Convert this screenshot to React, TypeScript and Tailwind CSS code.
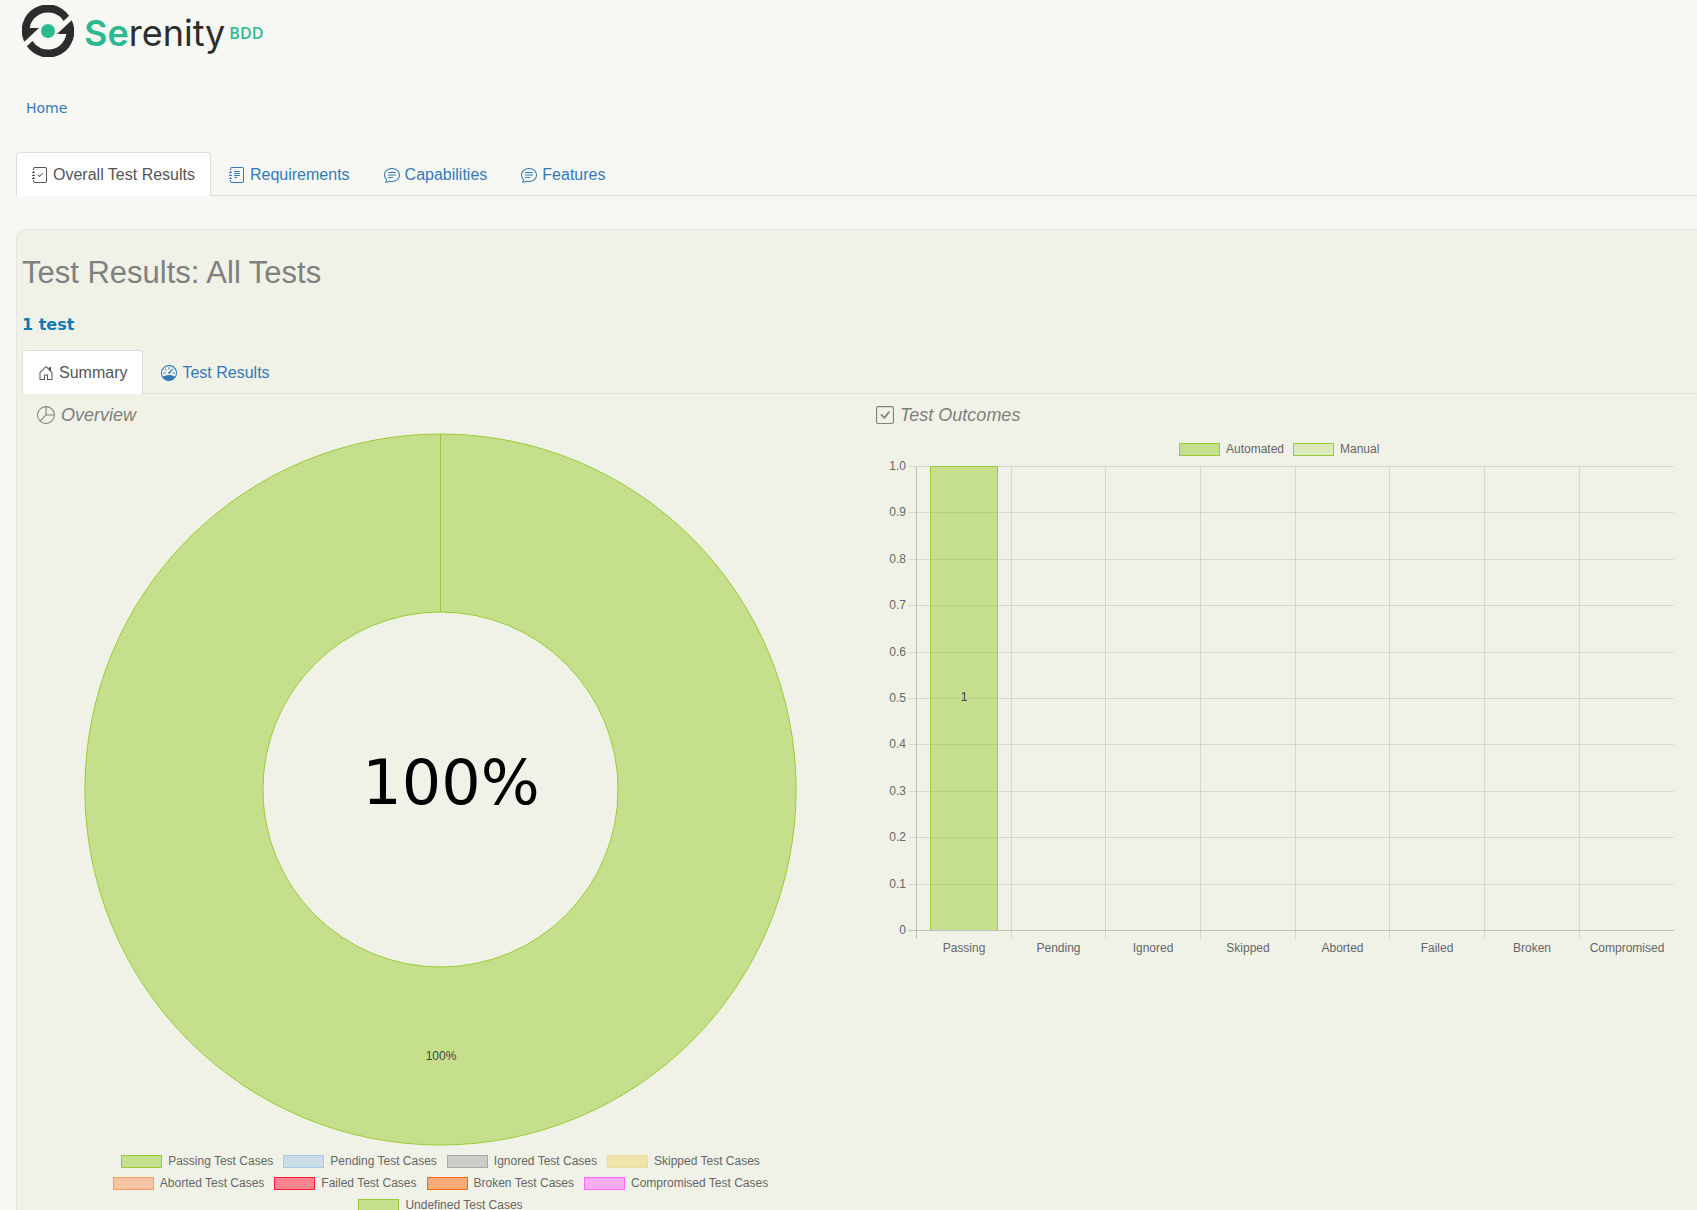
import {
  BsChatText,
  BsCheckSquare,
  BsHouseDoor,
  BsJournalCheck,
  BsJournalText,
  BsPieChart,
  BsSpeedometer,
} from "react-icons/bs";
import type { IconType } from "react-icons";

type Tab = { label: string; icon: IconType; active?: boolean };

const mainTabs: Tab[] = [
  { label: "Overall Test Results", icon: BsJournalCheck, active: true },
  { label: "Requirements", icon: BsJournalText },
  { label: "Capabilities", icon: BsChatText },
  { label: "Features", icon: BsChatText },
];

const resultTabs: Tab[] = [
  { label: "Summary", icon: BsHouseDoor, active: true },
  { label: "Test Results", icon: BsSpeedometer },
];

const outcomes = ["Passing", "Pending", "Ignored", "Skipped", "Aborted", "Failed", "Broken", "Compromised"];
const ticks = ["1.0", "0.9", "0.8", "0.7", "0.6", "0.5", "0.4", "0.3", "0.2", "0.1", "0"];

const legend = [
  { label: "Passing Test Cases", swatch: "border-[#99cc33] bg-[#c6df8d]" },
  { label: "Pending Test Cases", swatch: "border-[#a8caec] bg-[#cbdde9]" },
  { label: "Ignored Test Cases", swatch: "border-[#a9a9a9] bg-[#cccdc8]" },
  { label: "Skipped Test Cases", swatch: "border-[#eedd99] bg-[#efe4ab]" },
  { label: "Aborted Test Cases", swatch: "border-[#ff9966] bg-[#f8c4a6]" },
  { label: "Failed Test Cases", swatch: "border-[#ff1a3c] bg-[#f9838e]" },
  { label: "Broken Test Cases", swatch: "border-[#ff6600] bg-[#f8aa77]" },
  { label: "Compromised Test Cases", swatch: "border-[#ff66ff] bg-[#f8adf3]" },
  { label: "Undefined Test Cases", swatch: "border-[#99cc33] bg-[#c6df8d]" },
];

const logoBlade = "M2.3 36.8A26 26 0 0 1 47.1 10.7L41.6 16A18.5 18.5 0 0 0 7.7 23H17Z";

function Logo() {
  return (
    <a href="#" className="flex w-fit items-start" aria-label="Serenity BDD">
      <svg viewBox="0 0 52 52" className="mt-[5px] h-[52px] w-[52px]" aria-hidden="true">
        <path d={logoBlade} fill="#2d2d2d" />
        <path d={logoBlade} fill="#2d2d2d" transform="rotate(180 26 26)" />
        <circle cx="26" cy="26" r="7" fill="#2db990" />
      </svg>
      <span className="ml-2.5 mt-[9px] font-[Inter,sans-serif] text-[36px] leading-[48px] text-[#2d2d2d]">
        <span className="font-semibold text-[#2db990]">Se</span>renity
      </span>
      <span className="ml-1 mt-[21px] font-['Open_Sans',sans-serif] text-base font-semibold leading-6 text-[#2db990]">BDD</span>
    </a>
  );
}

function TabBar({ tabs, label }: { tabs: Tab[]; label: string }) {
  return (
    <div role="tablist" aria-label={label} className="flex gap-0.5 border-b border-[#dddddd]">
      {tabs.map(({ label: text, icon: Icon, active }) => (
        <button
          key={text}
          type="button"
          role="tab"
          aria-selected={!!active}
          className={
            active
              ? "-mb-px flex items-center gap-[5px] rounded-t border border-b-0 border-[#dddddd] bg-white px-[15px] py-2.5 text-base leading-[23px] text-[#555555]"
              : "-mb-px flex items-center gap-[5px] rounded-t border border-b-0 border-transparent px-[15px] py-2.5 text-base leading-[23px] text-[#337ab7]"
          }
        >
          <Icon className="size-4" aria-hidden="true" />
          {text}
        </button>
      ))}
    </div>
  );
}

function SectionTitle({ icon: Icon, text }: { icon: IconType; text: string }) {
  return (
    <h2 className="flex items-center gap-1.5 pl-px text-lg italic leading-5 text-[#808080]">
      <Icon className="size-[18px]" aria-hidden="true" />
      {text}
    </h2>
  );
}

function Donut() {
  return (
    <svg viewBox="0 0 809 713" className="mt-2 block w-full" role="img" aria-label="Overview of test cases">
      <path
        fillRule="evenodd"
        d="M404.5 1A355.5 355.5 0 1 1 404.5 712A355.5 355.5 0 1 1 404.5 1ZM404.5 179A177.5 177.5 0 1 0 404.5 534A177.5 177.5 0 1 0 404.5 179Z"
        fill="#c6df8d"
        stroke="#99cc33"
      />
      <path d="M404.5 1V179" stroke="#99cc33" />
      <text x="415" y="371" textAnchor="middle" fontSize="62" fill="#000" className="font-['DejaVu_Sans',sans-serif]">
        100%
      </text>
      <text x="405" y="627" textAnchor="middle" fontSize="12" fill="#444">
        100%
      </text>
    </svg>
  );
}

function BarChart() {
  const left = 41.5;
  const top = 33.5;
  const right = 799;
  const bottom = 497.5;
  const columnX = (i: number) => Math.round((i * (right - left)) / 8) + left;
  const rowY = (i: number) => Math.round((i * (bottom - top)) / 10) + top;
  return (
    <svg viewBox="0 0 809 530" className="mt-2 block w-full" role="img" aria-label="Test outcomes by result">
      <g fontSize="12" fill="#666">
        <rect x="304.5" y="10.5" width="40" height="12" fill="#c6df8d" stroke="#99cc33" />
        <text x="351" y="20">Automated</text>
        <rect x="418.5" y="10.5" width="40" height="12" fill="#dbe9bb" stroke="#99cc33" />
        <text x="465" y="20">Manual</text>
      </g>
      <g stroke="#000">
        {ticks.map((tick, i) => (
          <path key={tick} d={`M${left - 8} ${rowY(i)}H${right}`} strokeOpacity={i === 10 ? 0.2 : 0.1} />
        ))}
        {outcomes.map((name, i) => (
          <path key={name} d={`M${columnX(i)} ${top}V${bottom + 8}`} strokeOpacity={i === 0 ? 0.2 : 0.1} />
        ))}
      </g>
      <rect x="55" y="33" width="68" height="464" fill="#99cc33" fillOpacity="0.5" />
      <path d="M55.5 497V33.5H122.5V497" fill="none" stroke="#99cc33" />
      <g fontSize="12" fill="#666" textAnchor="end">
        {ticks.map((tick, i) => (
          <text key={tick} x="31" y={rowY(i) + 3}>{tick}</text>
        ))}
      </g>
      <g fontSize="12" fill="#666" textAnchor="middle">
        {outcomes.map((name, i) => (
          <text key={name} x={(columnX(i) + columnX(i + 1)) / 2} y="519">{name}</text>
        ))}
        <text x="89" y="268" fill="#444">1</text>
      </g>
    </svg>
  );
}

export default function App() {
  return (
    <div className="min-h-screen bg-[#f7f8f3] pl-4 font-['Liberation_Sans',Arial,sans-serif]">
      <header className="h-[152px] pl-1.5">
        <Logo />
        <nav aria-label="Breadcrumb" className="pl-1 pt-[39px]">
          <a href="#" className="font-['DejaVu_Sans',sans-serif] text-sm leading-5 text-[#337ab7]">Home</a>
        </nav>
      </header>
      <TabBar tabs={mainTabs} label="Report sections" />
      <main className="mt-[33px] rounded-tl-[9px] border-l border-t border-[#e5e6df] bg-[#f0f2e8] pb-4 pl-[5px]">
        <h1 className="mt-[25px] text-[31px] leading-9 text-[#808080]">Test Results: All Tests</h1>
        <p className="mt-[22px] font-['DejaVu_Sans',sans-serif] text-base font-bold leading-6 text-[#1279b3]">1 test</p>
        <div className="mt-[13px]">
          <TabBar tabs={resultTabs} label="Result views" />
        </div>
        <div className="grid grid-cols-2 gap-[30px] pl-3.5 pr-[13px] pt-[11px]">
          <section>
            <SectionTitle icon={BsPieChart} text="Overview" />
            <Donut />
            <ul className="mx-auto mt-1 flex max-w-[680px] flex-wrap justify-center gap-x-2.5 text-xs leading-[22px] text-[#666666]">
              {legend.map((item) => (
                <li key={item.label} className="flex items-center gap-1.5">
                  <span className={`h-[13px] w-[41px] border ${item.swatch}`} />
                  {item.label}
                </li>
              ))}
            </ul>
          </section>
          <section>
            <SectionTitle icon={BsCheckSquare} text="Test Outcomes" />
            <BarChart />
          </section>
        </div>
      </main>
    </div>
  );
}
